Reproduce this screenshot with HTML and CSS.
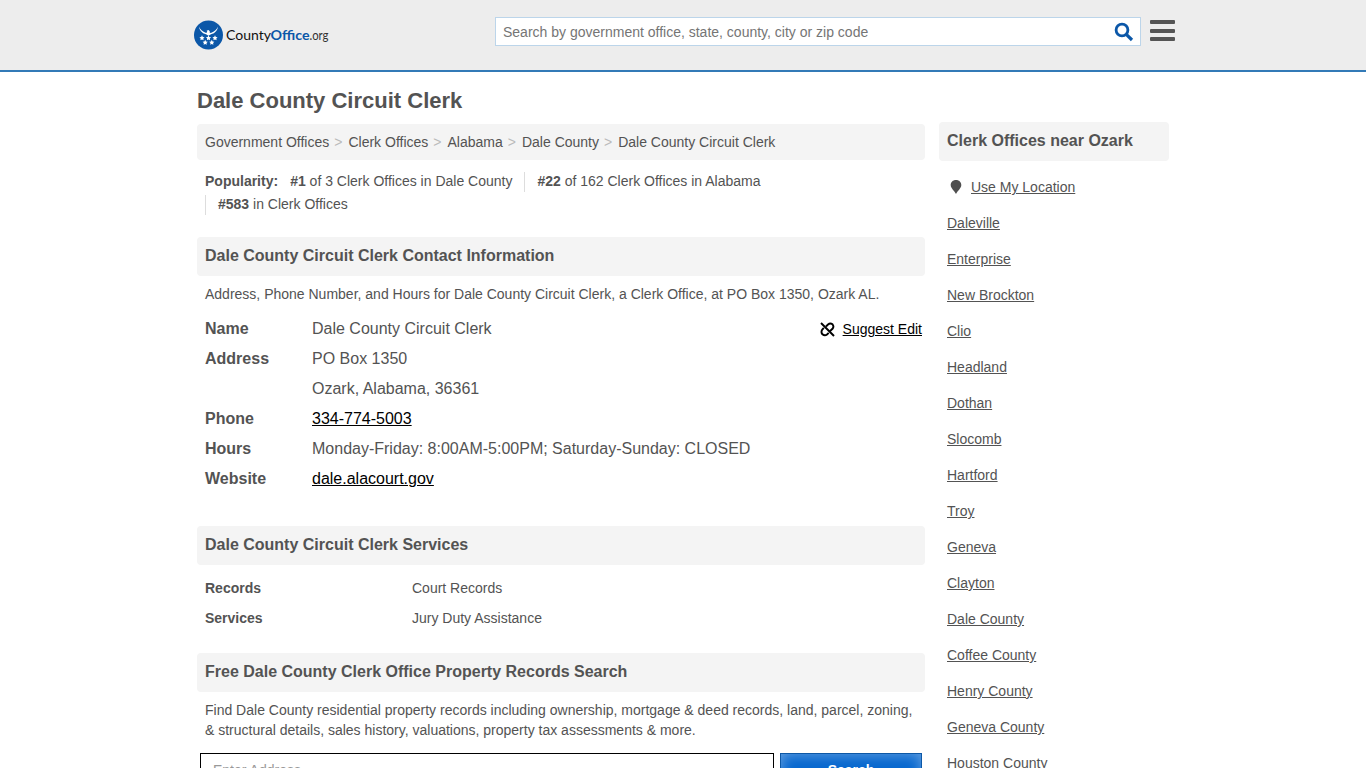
FILE: index.html
```
<!DOCTYPE html>
<html lang="en">

<head>
    <meta charset="UTF-8">
    <meta name="viewport" content="width=device-width, initial-scale=1.0">
    <title>Dale County Circuit Clerk</title>
    <link rel="stylesheet" href="styles.css">
</head>

<body>
    <header class="header">
        <div class="header-inner">
            <a class="logo" href="#">
                <svg width="140" height="32" viewBox="0 0 140 32">
                    <circle cx="14.5" cy="16" r="14.5" fill="#0b57a8" />
                    <g fill="#fff">
                        <path d="M5 7.500Q6.500 11.500 12.200 14L13.300 12.700 12.600 11.800 14.500 11 15.800 12.200 15.600 13.500 16.800 14Q22.500 11.500 24 7.500Q23.500 13.500 17 15.300L14.500 16.800 12 15.300Q5.500 13.500 5 7.500z" />
                        <path id="star" d="M8 16.300l.8 1.700 1.800.2-1.300 1.300.3 1.800-1.600-.9-1.600.9.3-1.800-1.300-1.300 1.800-.2z" />
                        <use href="#star" x="6.500" />
                        <use href="#star" x="13" />
                        <use href="#star" x="3.200" y="4.500" />
                        <use href="#star" x="9.800" y="4.500" />
                    </g>
                    <g font-size="14">
                        <text x="32" y="21" fill="#111" textLength="45" lengthAdjust="spacingAndGlyphs">County</text>
                        <text x="76.500" y="21" fill="#0b57a8" font-weight="bold" textLength="39" lengthAdjust="spacingAndGlyphs">Office</text>
                        <text x="115.500" y="21" fill="#333" textLength="19" lengthAdjust="spacingAndGlyphs">.org</text>
                    </g>
                </svg>
            </a>
            <form class="search">
                <input type="text" placeholder="Search by government office, state, county, city or zip code">
                <svg class="search-icon" width="20" height="20" viewBox="0 0 20 20">
                    <circle cx="8" cy="8" r="5.900" fill="none" stroke="#0b57a8" stroke-width="2.800" />
                    <path d="M12.300 12.300L18 18" stroke="#0b57a8" stroke-width="3.200" />
                </svg>
            </form>
            <div class="menu"><span></span><span></span><span></span></div>
        </div>
    </header>

    <div class="container">
        <main class="main">
            <h1>Dale County Circuit Clerk</h1>
            <ul class="breadcrumbs">
                <li>Government Offices</li>
                <li>Clerk Offices</li>
                <li>Alabama</li>
                <li>Dale County</li>
                <li>Dale County Circuit Clerk</li>
            </ul>
            <ul class="popularity">
                <li><b>Popularity:</b></li>
                <li><b>#1</b> of 3 Clerk Offices in Dale County</li>
                <li class="rank"><b>#22</b> of 162 Clerk Offices in Alabama</li>
                <li class="rank"><b>#583</b> in Clerk Offices</li>
            </ul>

            <h2>Dale County Circuit Clerk Contact Information</h2>
            <p>Address, Phone Number, and Hours for Dale County Circuit Clerk, a Clerk Office, at PO Box 1350, Ozark AL.</p>
            <div class="contact">
                <dl>
                    <dt>Name</dt>
                    <dd>Dale County Circuit Clerk</dd>
                    <dt>Address</dt>
                    <dd>PO Box 1350<br>Ozark, Alabama, 36361</dd>
                    <dt>Phone</dt>
                    <dd><a href="#">334-774-5003</a></dd>
                    <dt>Hours</dt>
                    <dd>Monday-Friday: 8:00AM-5:00PM; Saturday-Sunday: CLOSED</dd>
                    <dt>Website</dt>
                    <dd><a href="#">dale.alacourt.gov</a></dd>
                </dl>
                <div class="suggest">
                    <svg width="15" height="15" viewBox="0 0 15 15" fill="none" stroke="#000" stroke-width="1.900">
                        <path d="M1 1L14 14" />
                        <path d="M6 4.500L8 2.500Q10.200.700 12.500 2.300Q14.300 4.500 12.500 6.800L9.800 9.200" />
                        <path d="M3.800 5.800L2.300 7.500Q.600 10 2.400 12.300Q4.800 14.300 7 12.500L8.700 10.800" />
                    </svg>
                    <a href="#">Suggest Edit</a>
                </div>
            </div>

            <h2>Dale County Circuit Clerk Services</h2>
            <dl class="services">
                <dt>Records</dt>
                <dd>Court Records</dd>
                <dt>Services</dt>
                <dd>Jury Duty Assistance</dd>
            </dl>

            <h2>Free Dale County Clerk Office Property Records Search</h2>
            <p>Find Dale County residential property records including ownership, mortgage &amp; deed records, land, parcel, zoning, &amp; structural details, sales history, valuations, property tax assessments &amp; more.</p>
            <form class="property">
                <input type="text" placeholder="Enter Address">
                <button type="button">Search</button>
            </form>
        </main>

        <aside class="sidebar">
            <h2>Clerk Offices near Ozark</h2>
            <ul>
                <li>
                    <svg class="pin" width="12" height="14" viewBox="0 0 12 14">
                        <path d="M6 0C2.800 0 .7 2.200.7 5c0 3.200 3.500 5.500 5.300 9 1.800-3.500 5.300-5.800 5.300-9 0-2.800-2.100-5-5.300-5z" fill="#4f4f4f" />
                    </svg>
                    <a href="#">Use My Location</a>
                </li>
                <li><a href="#">Daleville</a></li>
                <li><a href="#">Enterprise</a></li>
                <li><a href="#">New Brockton</a></li>
                <li><a href="#">Clio</a></li>
                <li><a href="#">Headland</a></li>
                <li><a href="#">Dothan</a></li>
                <li><a href="#">Slocomb</a></li>
                <li><a href="#">Hartford</a></li>
                <li><a href="#">Troy</a></li>
                <li><a href="#">Geneva</a></li>
                <li><a href="#">Clayton</a></li>
                <li><a href="#">Dale County</a></li>
                <li><a href="#">Coffee County</a></li>
                <li><a href="#">Henry County</a></li>
                <li><a href="#">Geneva County</a></li>
                <li><a href="#">Houston County</a></li>
            </ul>
        </aside>
    </div>
</body>

</html>
```
FILE: styles.css
```
* {
    padding: 0;
    margin: 0;
    box-sizing: border-box;
}

body {
    height: 100vh;
    overflow: hidden;
    font: 14px/20px "Liberation Sans", Arial, sans-serif;
    color: #535353;
    background: #fff;
}

ul {
    list-style: none;
}

a {
    color: inherit;
}

.header {
    height: 72px;
    background: #ededed;
    border-bottom: 2px solid #337ab7;
}

.header-inner {
    width: 982px;
    margin: 0 auto;
    padding-left: 2px;
    display: flex;
    align-items: flex-start;
}

.logo {
    flex: none;
    width: 301px;
    padding-top: 19px;
}

.logo svg {
    display: block;
    font-family: Lato, sans-serif;
}

.search {
    flex: none;
    width: 646px;
    height: 29px;
    margin-top: 17px;
    padding-right: 6px;
    display: flex;
    align-items: center;
    background: #fff;
    border: 1px solid #bcd5ea;
}

.search input {
    flex: 1;
    border: 0;
    outline: 0;
    padding-left: 7px;
    font: inherit;
    background: none;
}

.search input::placeholder {
    color: #757575;
}

.menu {
    flex: none;
    width: 25px;
    height: 21px;
    margin: 20px 0 0 9px;
    display: flex;
    flex-direction: column;
    justify-content: space-between;
}

.menu span {
    height: 4px;
    border-radius: 1px;
    background: #555;
}

.container {
    width: 972px;
    margin: 0 auto;
    display: flex;
    gap: 14px;
}

.main {
    width: 728px;
}

h1 {
    padding: 14px 0 8px;
    font-size: 22px;
    line-height: 30px;
}

h2 {
    height: 39px;
    padding: 0 8px;
    font-size: 16px;
    line-height: 37px;
    background: #f4f4f4;
    border-radius: 4px;
}

.breadcrumbs {
    height: 36px;
    padding: 8px;
    display: flex;
    background: #f4f4f4;
    border-radius: 4px;
}

.breadcrumbs li + li::before {
    content: ">";
    padding: 0 6px 0 5px;
    color: #bbb;
}

.popularity {
    padding: 12px 8px 0;
    margin-bottom: 22px;
    display: flex;
    flex-wrap: wrap;
    row-gap: 3px;
    line-height: 18px;
}

.popularity li {
    height: 20px;
    padding-right: 12px;
}

.popularity .rank {
    padding-left: 12px;
    border-left: 1px solid #ddd;
}

/* keep the last rank on its own line */
.popularity .rank:nth-child(3) {
    margin-right: 80px;
}

p {
    padding: 8px 8px 0;
}

.contact {
    height: 213px;
    margin: 9px 3px 0 8px;
    display: flex;
    justify-content: space-between;
}

dl {
    display: grid;
    grid-template-columns: 107px auto;
    align-content: start;
    font-size: 16px;
    line-height: 30px;
}

.contact dl {
    padding-top: 1px;
}

dt {
    font-weight: bold;
}

dl a,
.suggest {
    color: #000;
}

.suggest {
    height: 32px;
    display: flex;
    align-items: center;
    gap: 8px;
}

.services {
    grid-template-columns: 207px auto;
    padding: 8px 8px 20px;
    font-size: 14px;
}

.property {
    display: flex;
    gap: 6px;
    padding: 13px 3px 0;
}

.property input {
    width: 574px;
    height: 34px;
    padding: 0 12px;
    border: 1px solid #000;
    font: inherit;
}

.property input::placeholder {
    color: #999;
}

.property button {
    width: 142px;
    height: 34px;
    border: 1px solid #0d58a6;
    background: #0868cf;
    box-shadow: inset 0 0 14px rgba(255, 255, 255, 0.4);
    color: #fff;
    font: bold 14px "Liberation Sans", Arial, sans-serif;
}

.sidebar {
    width: 230px;
    padding-top: 50px;
}

.sidebar ul {
    padding: 8px 8px 0;
}

.sidebar li {
    height: 36px;
    display: flex;
    align-items: center;
}

.pin {
    margin: 0 9px 0 3px;
}
```
